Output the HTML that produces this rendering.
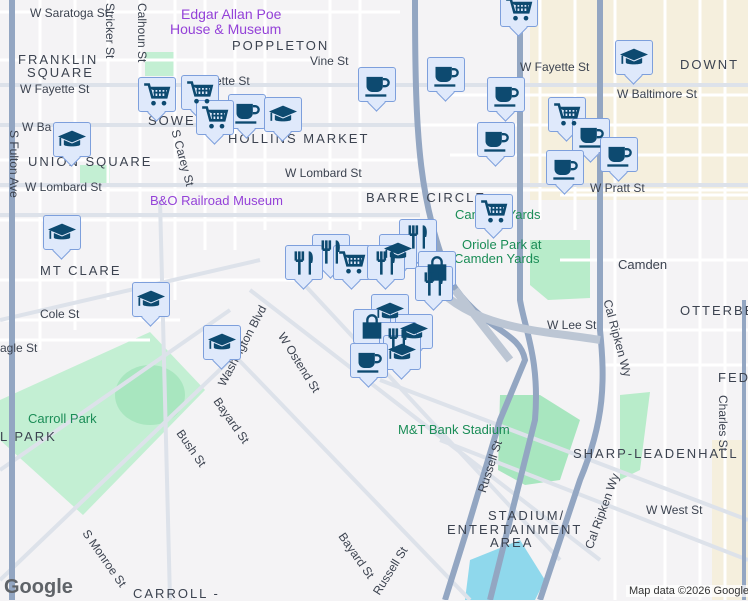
<!DOCTYPE html>
<html><head><meta charset="utf-8"><style>
body{margin:0;width:748px;height:600px;overflow:hidden;background:#f4f3f5;font-family:"Liberation Sans",sans-serif;}
#m{position:absolute;left:0;top:0}
.l{position:absolute;color:#3c4350;font-size:12px;white-space:nowrap}
.r{position:absolute;color:#3c4350;font-size:12px;white-space:nowrap;transform-origin:0 0}
.n{position:absolute;color:#3c4350;font-size:13px;letter-spacing:2px;font-weight:500;white-space:nowrap}
.mk{position:absolute;width:38px;height:35px;background:#dfe9fb;border:1.5px solid #7d9fdc;border-radius:3px;box-sizing:border-box}
.mk:after{content:"";position:absolute;left:11px;bottom:-8px;width:12px;height:12px;background:#dfe9fb;border-right:1.5px solid #7d9fdc;border-bottom:1.5px solid #7d9fdc;transform:rotate(45deg)}
.mk svg{position:absolute;left:4px;top:3px;width:28px;height:28px;z-index:1}
</style></head><body>
<svg id="m" width="748" height="600">
<defs>
<symbol id="cart" viewBox="0 0 24 24"><path d="M1 3h4l3 11h12l2-8H6" fill="none" stroke="#0d4a70" stroke-width="2.2"/><path d="M8 7h13M9 10h11M10 7v7M13 7v7M16 7v7M19 7v6" stroke="#0d4a70" stroke-width="1.5"/><circle cx="9" cy="19" r="2" fill="#0d4a70"/><circle cx="18" cy="19" r="2" fill="#0d4a70"/></symbol>
<symbol id="cup" viewBox="0 0 24 24"><path d="M3 5h14v8a5 5 0 0 1-5 5H8a5 5 0 0 1-5-5z" fill="#0d4a70"/><path d="M17 7h2a3 3 0 0 1 0 6h-2" fill="none" stroke="#0d4a70" stroke-width="2"/><rect x="2" y="20" width="18" height="2" fill="#0d4a70"/></symbol>
<symbol id="edu" viewBox="0 0 24 24"><path d="M0 9l12-5 12 5-12 5z" fill="#0d4a70"/><path d="M5 12v4c0 2 14 2 14 0v-4l-7 3z" fill="#0d4a70"/><path d="M2 10v7" stroke="#0d4a70" stroke-width="1.5"/></symbol>
<symbol id="fork" viewBox="0 0 24 24"><path d="M5 2v8M8 2v8M11 2v8M5 10h6M8 10v12" stroke="#0d4a70" stroke-width="2.2" fill="none"/><path d="M17 2c3 1 3 7 2 10h-1v10h-2V2z" fill="#0d4a70"/></symbol>
<symbol id="bag" viewBox="0 0 24 24"><rect x="4" y="8" width="16" height="14" fill="#0d4a70"/><path d="M8 9V6a4 4 0 0 1 8 0v3" fill="none" stroke="#0d4a70" stroke-width="2"/></symbol>
</defs>
<rect x="530" y="0" width="218" height="200" fill="#f5efdd"/>
<rect x="712" y="440" width="36" height="160" fill="#f5efdd"/>
<polygon points="0,400 150,332 205,390 83,515 0,440" fill="#c3efd3"/>
<ellipse cx="150" cy="395" rx="35" ry="30" fill="#a8e6bf"/>
<polygon points="530,240 590,240 590,298 548,300 530,285" fill="#b8ecca"/>
<polygon points="500,395 540,395 580,420 560,480 525,485 498,470" fill="#a8e6bf"/>
<polygon points="620,395 650,392 640,470 620,480" fill="#b8ecca"/>
<rect x="145" y="52" width="30" height="24" fill="#c3efd3"/>
<rect x="80" y="165" width="30" height="22" fill="#c3efd3"/>
<polygon points="470,560 520,540 545,580 535,600 465,600" fill="#8fd8ec"/>
<g stroke="#ffffff" stroke-width="3" fill="none">
<path d="M0 12H400M0 85H748M0 125H748M0 190H748M0 160H420M0 60H330M0 220H420M0 280H300M0 320H180M0 340H150M450 95H748M450 155H748M560 195H748M560 260H748M600 330H748M600 365H748"/>
<path d="M40 0V350M75 0V330M108 0V300M140 0V320M175 0V300M205 0V250M235 0V250M265 0V230M330 0V230M360 0V230M540 0V220M575 0V230M615 0V600M665 0V600M700 0V600M725 0V600"/>
</g>
<g stroke="#dde2ea" stroke-width="4" fill="none">
<path d="M0 185H748M0 215H420M0 125H420M0 85H748M250 290L600 560M210 330L470 600M300 280L560 560M380 380L748 520M440 440L748 560M0 470L230 310M0 580L230 360M0 320L260 260M160 200L170 600"/>
</g>
<g stroke="#93a6c2" stroke-width="6" fill="none">
<path d="M12 0V600"/>
<path d="M415 0C415 150 420 200 450 280C480 330 520 330 525 360L500 420L470 520L445 600"/>
<path d="M520 0V300C525 330 540 360 535 420L520 480L490 600"/>
<path d="M600 0V330C605 380 605 420 580 480L540 600"/>
<path d="M744 300V600" stroke-width="4"/>
</g>
<g stroke="#bcc6d4" stroke-width="8" fill="none"><path d="M430 280C470 330 540 330 600 340M455 290L510 360"/></g>
</svg>
<div class="l" style="left:30px;top:6px">W Saratoga St</div>
<div class="l" style="left:181px;top:6px;color:#9442d8;font-size:14px">Edgar Allan Poe</div>
<div class="l" style="left:170px;top:21px;color:#9442d8;font-size:14px">House &amp; Museum</div>
<div class="n" style="left:232px;top:38px">POPPLETON</div>
<div class="l" style="left:310px;top:54px">Vine St</div>
<div class="n" style="left:18px;top:52px">FRANKLIN</div>
<div class="n" style="left:27px;top:65px">SQUARE</div>
<div class="l" style="left:20px;top:82px">W Fayette St</div>
<div class="l" style="left:215px;top:74px">ette St</div>
<div class="l" style="left:520px;top:60px">W Fayette St</div>
<div class="n" style="left:680px;top:57px">DOWNT</div>
<div class="l" style="left:617px;top:87px">W Baltimore St</div>
<div class="l" style="left:22px;top:120px">W Ba</div>
<div class="n" style="left:148px;top:113px">SOWEB</div>
<div class="n" style="left:228px;top:131px">HOLLINS MARKET</div>
<div class="n" style="left:28px;top:154px">UNION SQUARE</div>
<div class="l" style="left:25px;top:180px">W Lombard St</div>
<div class="l" style="left:285px;top:166px">W Lombard St</div>
<div class="n" style="left:366px;top:190px">BARRE CIRCLE</div>
<div class="l" style="left:590px;top:181px">W Pratt St</div>
<div class="l" style="left:150px;top:193px;color:#9442d8;font-size:13px">B&amp;O Railroad Museum</div>
<div class="l" style="left:455px;top:207px;color:#1b8d57;font-size:13px">Camden Yards</div>
<div class="l" style="left:462px;top:237px;color:#1b8d57;font-size:13px">Oriole Park at</div>
<div class="l" style="left:454px;top:251px;color:#1b8d57;font-size:13px">Camden Yards</div>
<div class="l" style="left:618px;top:257px;font-size:13px">Camden</div>
<div class="n" style="left:40px;top:263px">MT CLARE</div>
<div class="l" style="left:40px;top:307px">Cole St</div>
<div class="l" style="left:0px;top:341px">agle St</div>
<div class="n" style="left:680px;top:303px">OTTERBE</div>
<div class="l" style="left:547px;top:318px">W Lee St</div>
<div class="n" style="left:718px;top:370px">FEDE</div>
<div class="l" style="left:28px;top:411px;color:#1b8d57;font-size:13px">Carroll Park</div>
<div class="n" style="left:0px;top:429px">L PARK</div>
<div class="l" style="left:398px;top:422px;color:#1b8d57;font-size:13px">M&amp;T Bank Stadium</div>
<div class="n" style="left:573px;top:446px">SHARP-LEADENHALL</div>
<div class="l" style="left:646px;top:503px">W West St</div>
<div class="n" style="left:488px;top:508px">STADIUM/</div>
<div class="n" style="left:447px;top:522px">ENTERTAINMENT</div>
<div class="n" style="left:490px;top:535px">AREA</div>
<div class="n" style="left:133px;top:586px">CARROLL -</div>
<div class="r" style="left:21px;top:130px;transform:rotate(90deg)">S Fulton Ave</div>
<div class="r" style="left:117px;top:3px;transform:rotate(90deg)">Stricker St</div>
<div class="r" style="left:149px;top:3px;transform:rotate(90deg)">Calhoun St</div>
<div class="r" style="left:182px;top:128px;transform:rotate(75deg)">S Carey St</div>
<div class="r" style="left:215px;top:382px;transform:rotate(-62deg)">Washington Blvd</div>
<div class="r" style="left:287px;top:330px;transform:rotate(58deg)">W Ostend St</div>
<div class="r" style="left:222px;top:395px;transform:rotate(55deg)">Bayard St</div>
<div class="r" style="left:185px;top:427px;transform:rotate(55deg)">Bush St</div>
<div class="r" style="left:91px;top:527px;transform:rotate(55deg)">S Monroe St</div>
<div class="r" style="left:370px;top:590px;transform:rotate(-58deg)">Russell St</div>
<div class="r" style="left:475px;top:490px;transform:rotate(-72deg)">Russell St</div>
<div class="r" style="left:614px;top:298px;transform:rotate(75deg)">Cal Ripken Wy</div>
<div class="r" style="left:582px;top:546px;transform:rotate(-70deg)">Cal Ripken Wy</div>
<div class="r" style="left:730px;top:395px;transform:rotate(90deg)">Charles St</div>
<div class="r" style="left:347px;top:530px;transform:rotate(55deg)">Bayard St</div>
<div style="position:absolute;left:4px;top:576px;font-size:20px;color:#5f6368;font-weight:bold">Google</div>
<div style="position:absolute;left:626px;top:585px;font-size:11px;color:#333;background:rgba(255,255,255,.7);padding:0 3px;white-space:nowrap">Map data ©2026 Google</div>

<div class="mk" style="left:500px;top:-8px"><svg><use href="#cart"/></svg></div>
<div class="mk" style="left:358px;top:67px"><svg><use href="#cup"/></svg></div>
<div class="mk" style="left:427px;top:57px"><svg><use href="#cup"/></svg></div>
<div class="mk" style="left:138px;top:77px"><svg><use href="#cart"/></svg></div>
<div class="mk" style="left:181px;top:75px"><svg><use href="#cart"/></svg></div>
<div class="mk" style="left:228px;top:94px"><svg><use href="#cup"/></svg></div>
<div class="mk" style="left:196px;top:100px"><svg><use href="#cart"/></svg></div>
<div class="mk" style="left:264px;top:97px"><svg><use href="#edu"/></svg></div>
<div class="mk" style="left:53px;top:122px"><svg><use href="#edu"/></svg></div>
<div class="mk" style="left:615px;top:40px"><svg><use href="#edu"/></svg></div>
<div class="mk" style="left:487px;top:77px"><svg><use href="#cup"/></svg></div>
<div class="mk" style="left:548px;top:97px"><svg><use href="#cart"/></svg></div>
<div class="mk" style="left:572px;top:118px"><svg><use href="#cup"/></svg></div>
<div class="mk" style="left:477px;top:122px"><svg><use href="#cup"/></svg></div>
<div class="mk" style="left:600px;top:137px"><svg><use href="#cup"/></svg></div>
<div class="mk" style="left:546px;top:150px"><svg><use href="#cup"/></svg></div>
<div class="mk" style="left:475px;top:194px"><svg><use href="#cart"/></svg></div>
<div class="mk" style="left:43px;top:215px"><svg><use href="#edu"/></svg></div>
<div class="mk" style="left:132px;top:282px"><svg><use href="#edu"/></svg></div>
<div class="mk" style="left:203px;top:325px"><svg><use href="#edu"/></svg></div>
<div class="mk" style="left:399px;top:219px"><svg><use href="#fork"/></svg></div>
<div class="mk" style="left:312px;top:234px"><svg><use href="#fork"/></svg></div>
<div class="mk" style="left:379px;top:234px"><svg><use href="#edu"/></svg></div>
<div class="mk" style="left:285px;top:245px"><svg><use href="#fork"/></svg></div>
<div class="mk" style="left:333px;top:245px"><svg><use href="#cart"/></svg></div>
<div class="mk" style="left:418px;top:251px"><svg><use href="#bag"/></svg></div>
<div class="mk" style="left:367px;top:245px"><svg><use href="#fork"/></svg></div>
<div class="mk" style="left:415px;top:266px"><svg><use href="#fork"/></svg></div>
<div class="mk" style="left:371px;top:294px"><svg><use href="#edu"/></svg></div>
<div class="mk" style="left:353px;top:309px"><svg><use href="#bag"/></svg></div>
<div class="mk" style="left:395px;top:314px"><svg><use href="#edu"/></svg></div>
<div class="mk" style="left:379px;top:322px"><svg><use href="#fork"/></svg></div>
<div class="mk" style="left:383px;top:335px"><svg><use href="#edu"/></svg></div>
<div class="mk" style="left:350px;top:343px"><svg><use href="#cup"/></svg></div>
</body></html>
